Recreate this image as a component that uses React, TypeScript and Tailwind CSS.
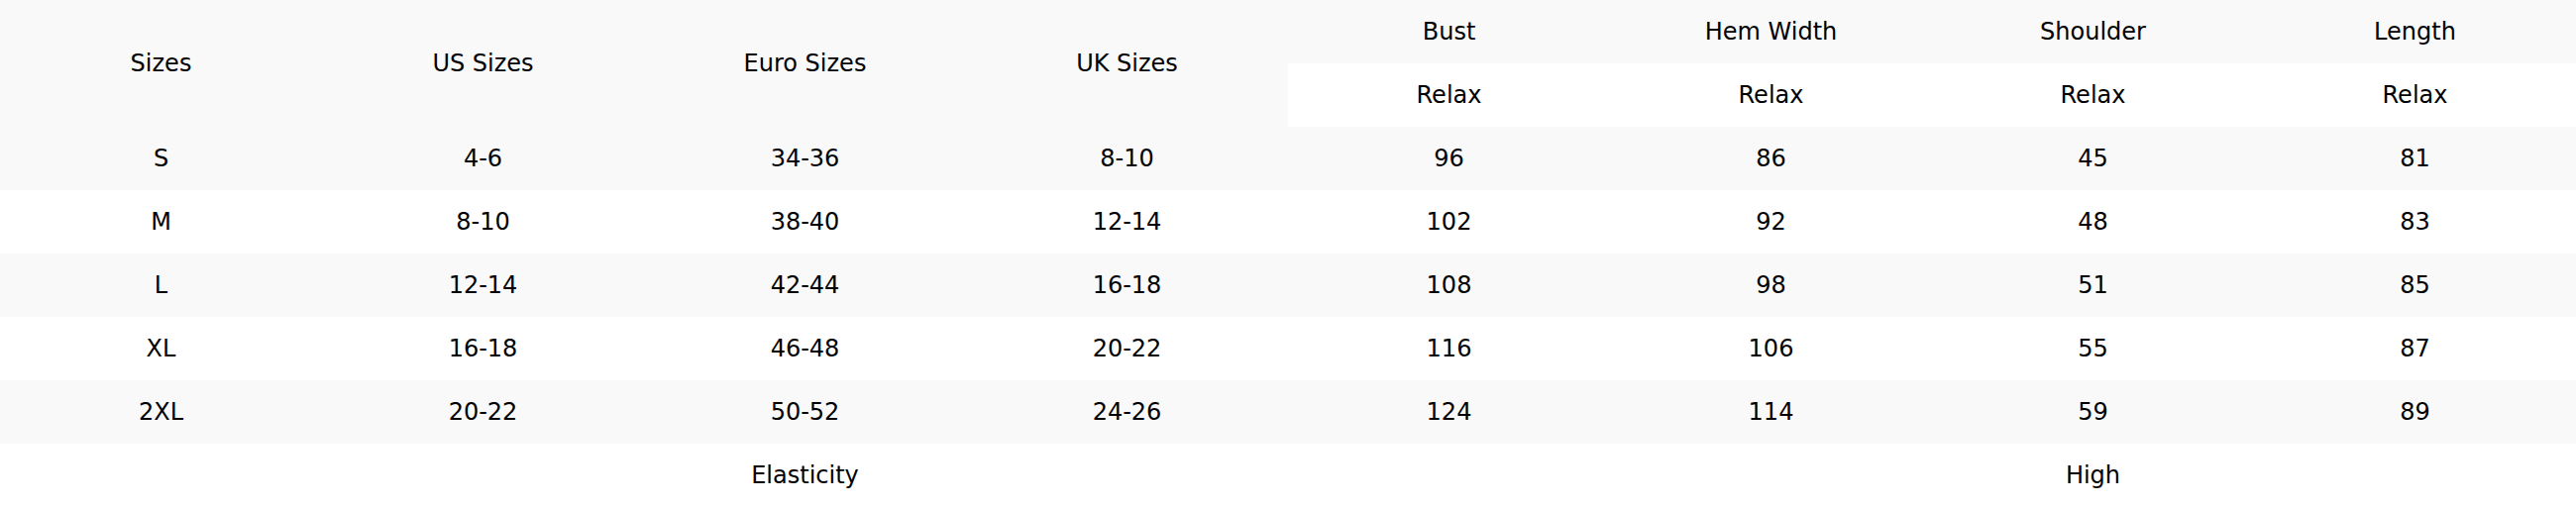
const rows = [
  ['S', '4-6', '34-36', '8-10', '96', '86', '45', '81'],
  ['M', '8-10', '38-40', '12-14', '102', '92', '48', '83'],
  ['L', '12-14', '42-44', '16-18', '108', '98', '51', '85'],
  ['XL', '16-18', '46-48', '20-22', '116', '106', '55', '87'],
  ['2XL', '20-22', '50-52', '24-26', '124', '114', '59', '89'],
];

const cell = 'h-16 w-[325px] p-0 text-center align-middle font-normal';

export default function App() {
  return (
    <div className="w-[2600px] h-[512px] bg-white text-black text-[24px] font-['DejaVu_Sans',sans-serif]">
      <table className="w-[2600px] border-collapse table-fixed">
        <thead>
          <tr className="bg-[#f9f9f9]">
            <th rowSpan={2} className={cell}>Sizes</th>
            <th rowSpan={2} className={cell}>US Sizes</th>
            <th rowSpan={2} className={cell}>Euro Sizes</th>
            <th rowSpan={2} className={cell}>UK Sizes</th>
            <th className={cell}>Bust</th>
            <th className={cell}>Hem Width</th>
            <th className={cell}>Shoulder</th>
            <th className={cell}>Length</th>
          </tr>
          <tr className="bg-white">
            <th className={cell}>Relax</th>
            <th className={cell}>Relax</th>
            <th className={cell}>Relax</th>
            <th className={cell}>Relax</th>
          </tr>
        </thead>
        <tbody>
          {rows.map((r, i) => (
            <tr key={r[0]} className={i % 2 === 0 ? 'bg-[#f9f9f9]' : 'bg-white'}>
              {r.map((v, j) => (
                <td key={j} className={cell}>{v}</td>
              ))}
            </tr>
          ))}
          <tr className="bg-white">
            <td colSpan={5} className={cell}>Elasticity</td>
            <td colSpan={3} className={cell}>High</td>
          </tr>
        </tbody>
      </table>
    </div>
  );
}
